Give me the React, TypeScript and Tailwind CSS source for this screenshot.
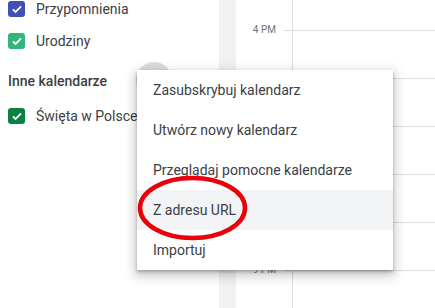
const hours = ["4 PM", "5 PM", "6 PM", "7 PM", "8 PM", "9 PM"];
// labels for 5–8 PM sit under the open menu, so only these are drawn
const shownHours = ["4 PM", "9 PM"];

const myCalendars = [
  { label: "Przypomnienia", color: "bg-[#3f51b5]" },
  { label: "Urodziny", color: "bg-[#33b679]" },
];

const menuItems = [
  "Zasubskrybuj kalendarz",
  "Utwórz nowy kalendarz",
  "Przeglądaj pomocne kalendarze",
  "Z adresu URL",
  "Importuj",
];

function CheckBox({ color }: { color: string }) {
  return (
    <span className={`flex h-[16px] w-[17px] items-center justify-center rounded-[3px] ${color}`}>
      <svg viewBox="0 0 24 24" className="h-[14px] w-[14px]" fill="none">
        <path d="M5 12.5l4.5 4.5L19 7.5" stroke="white" strokeWidth="3" />
      </svg>
    </span>
  );
}

function CalendarRow({ label, color }: { label: string; color: string }) {
  return (
    <div className="flex h-[32px] items-center gap-[11px] pl-[8px]">
      <CheckBox color={color} />
      <span className="text-[14px] text-[#3c4043]">{label}</span>
    </div>
  );
}

export default function App() {
  return (
    <div
      className="relative flex h-[308px] w-[435px] overflow-hidden bg-white"
      style={{ fontFamily: "Roboto, 'Noto Sans', sans-serif" }}
    >
      <aside className="w-[219px] shrink-0">
        <div className="mt-[-7px]">
          {myCalendars.map((c) => (
            <CalendarRow key={c.label} {...c} />
          ))}
        </div>
        <div className="mt-[12px] flex h-[24px] items-center pl-[8px] text-[14px] font-medium text-[#3c4043]">
          Inne kalendarze
        </div>
        <div className="mt-[7px]">
          <CalendarRow label="Święta w Polsce" color="bg-[#0b8043]" />
        </div>
      </aside>

      <div className="w-[17px] shrink-0 bg-[#f1f1f1]" />

      <div className="flex flex-1 flex-col">
        <div className="flex h-[30px] shrink-0">
          <div className="w-[56px] shrink-0" />
          <div className="flex-1 border-l border-[#dadce0]" />
        </div>
        {hours.map((h) => (
          <div key={h} className="flex h-[48px] shrink-0">
            <div className="w-[48px] shrink-0 pr-[8px] text-right">
              {shownHours.includes(h) && (
                <div className="mt-[-6px] text-[10px] leading-[12px] text-[#70757a]">{h}</div>
              )}
            </div>
            <div className="w-[8px] shrink-0 border-t border-[#dadce0]" />
            <div className="flex-1 border-l border-t border-[#dadce0]" />
          </div>
        ))}
      </div>

      <div className="absolute left-[136px] top-[62px] h-[36px] w-[36px] rounded-full bg-[#dcdcdc]" />

      <div className="absolute left-[137px] top-[70px] w-[256px] bg-white shadow-[0_4px_10px_3px_rgba(0,0,0,0.18),0_2px_3px_rgba(0,0,0,0.25)]">
        {menuItems.map((item) => (
          <div
            key={item}
            className={`flex h-[40px] items-center pl-[16px] text-[14px] text-[#3c4043] ${
              item === "Z adresu URL" ? "bg-[#f1f3f4]" : ""
            }`}
          >
            {item}
          </div>
        ))}
      </div>

      <svg className="pointer-events-none absolute left-0 top-0" width="435" height="308">
        <ellipse cx="192.5" cy="208" rx="52.5" ry="30" fill="none" stroke="#e8000b" strokeWidth="4.5" />
      </svg>
    </div>
  );
}
